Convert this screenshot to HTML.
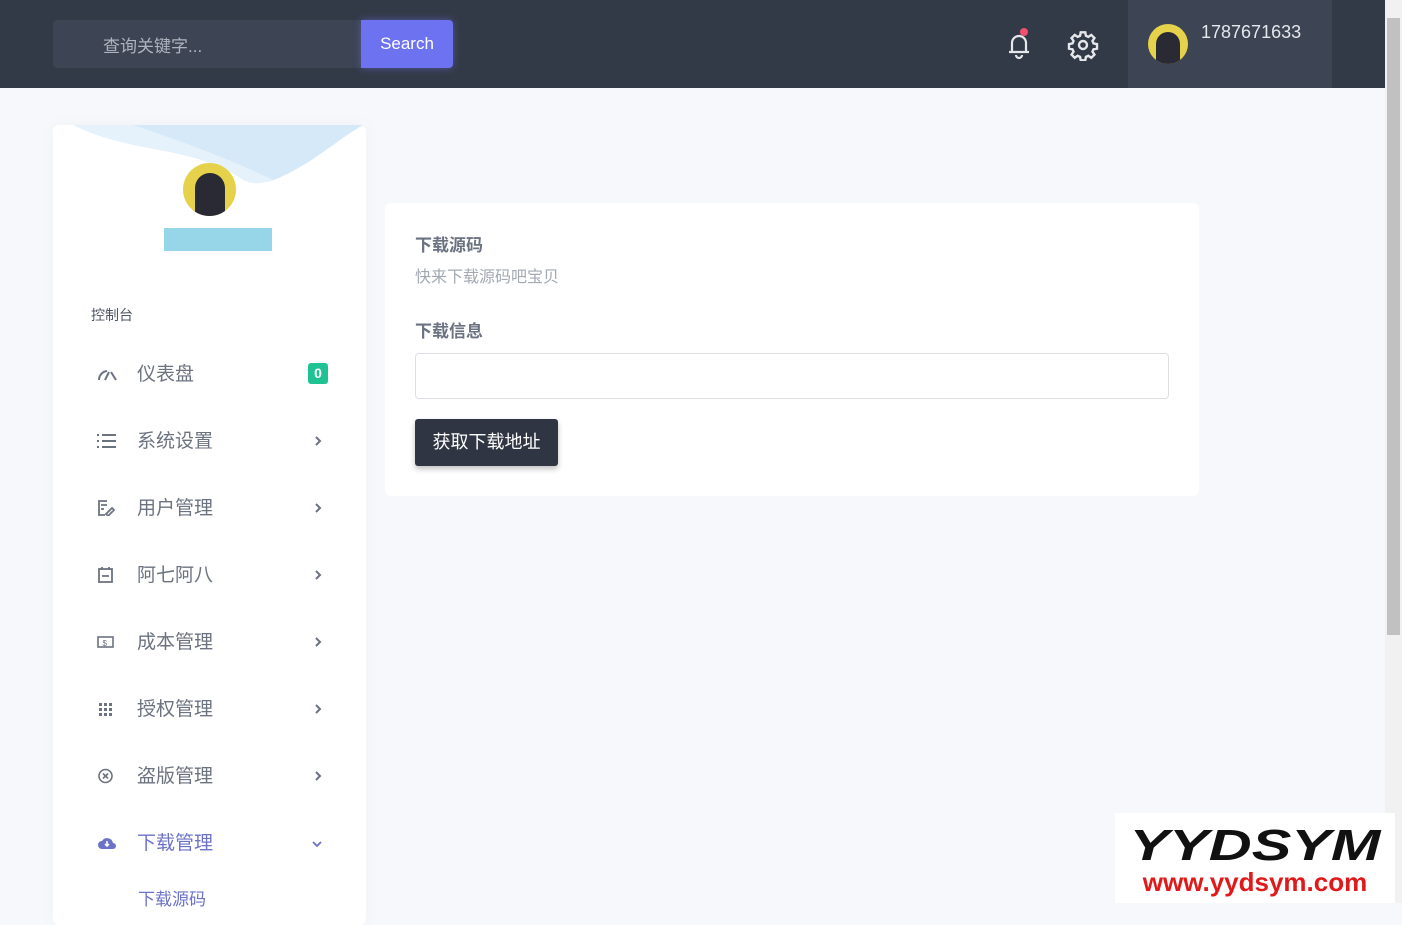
<!DOCTYPE html>
<html><head><meta charset="utf-8"><style>
*{box-sizing:border-box;margin:0;padding:0}
body{width:1402px;height:903px;overflow:hidden;background:#f7f8fc;font-family:"Liberation Sans","Noto Sans CJK SC",sans-serif;position:relative}
.hdr{position:absolute;left:0;top:0;width:1385px;height:88px;background:#333a47}
.search{position:absolute;left:53px;top:20px;width:308px;height:48px;background:#3d4453;border-radius:4px 0 0 4px;color:#aeb4bf;font-size:17px;padding:12px 0 0 50px}
.sbtn{position:absolute;left:361px;top:20px;width:92px;height:48px;background:#6c72f0;border-radius:0 4px 4px 0;color:#fff;font-size:17px;text-align:center;line-height:48px;box-shadow:0 0 8px rgba(108,114,240,.5)}
.user{position:absolute;left:1128px;top:0;width:204px;height:88px;background:#3d4454}
.av{border-radius:50%;background:#e6d24a;overflow:hidden;position:absolute}
.uname{position:absolute;left:73px;top:22px;color:#e5e7eb;font-size:18px}
.sb{position:absolute;right:0;top:0;width:17px;height:903px;background:#f1f1f1}
.thumb{position:absolute;left:2px;top:18px;width:13px;height:617px;background:#c1c1c1}
.side{position:absolute;left:53px;top:125px;width:313px;height:800px;background:#fff;border-radius:6px;box-shadow:0 0 20px rgba(0,0,0,.03)}
.item{position:absolute;left:0;width:313px;height:40px;color:#6b7280;font-size:19px}
.item .t{position:absolute;left:84px;top:4px}
.item svg{position:absolute;left:44px;top:11px}
.item svg.ch{left:260px;top:13px}
.card{position:absolute;left:385px;top:203px;width:814px;height:293px;background:#fff;border-radius:6px}
</style></head><body>
<div class="hdr">
<div class="search">查询关键字...</div>
<div class="sbtn">Search</div>
<svg style="position:absolute;left:1004px;top:28px" width="30" height="32" viewBox="0 0 30 32" fill="none" stroke="#e5e7eb" stroke-width="2.2"><path d="M5 24h20M8 24V15a7 7 0 0 1 14 0v9M12 27a3 3 0 0 0 6 0"/><circle cx="20" cy="4" r="4" fill="#f0506e" stroke="none"/></svg>
<svg style="position:absolute;left:1067px;top:29px" width="32" height="32" viewBox="0 0 24 24" fill="none" stroke="#e5e7eb" stroke-width="1.8"><circle cx="12" cy="12" r="3"/><path d="M10.3 2.5h3.4l.5 2.6 1.8.8 2.2-1.5 2.4 2.4-1.5 2.2.8 1.8 2.6.5v3.4l-2.6.5-.8 1.8 1.5 2.2-2.4 2.4-2.2-1.5-1.8.8-.5 2.6h-3.4l-.5-2.6-1.8-.8-2.2 1.5-2.4-2.4 1.5-2.2-.8-1.8-2.6-.5v-3.4l2.6-.5.8-1.8-1.5-2.2 2.4-2.4 2.2 1.5 1.8-.8z"/></svg>
<div class="user"><div class="av" style="left:20px;top:24px;width:40px;height:40px"><div style="position:absolute;left:8px;top:8px;width:24px;height:32px;background:#2a2a35;border-radius:12px 12px 0 0"></div></div><div class="uname">1787671633</div></div>
</div>
<div class="sb"><div class="thumb"></div></div>
<div class="side">
<svg style="position:absolute;left:20px;top:0" width="290" height="60" viewBox="0 0 290 60"><path d="M0 0C60 30 120 20 170 55C200 70 240 30 290 0Z" fill="#e6f2fb"/><path d="M60 0C120 20 170 40 200 55C240 40 270 10 290 0Z" fill="#cfe6f7" opacity=".7"/></svg>
<div class="av" style="left:130px;top:38px;width:53px;height:53px"><div style="position:absolute;left:12px;top:10px;width:30px;height:43px;background:#2a2a35;border-radius:15px 15px 0 0"></div></div>
<div style="position:absolute;left:111px;top:103px;width:108px;height:23px;background:#97d6e8"></div>
<div style="position:absolute;left:38px;top:180px;font-size:14px;color:#4b5563">控制台</div>
<div class="item" style="top:230px"><svg width="22" height="16" viewBox="0 0 22 16" fill="none" stroke="#6b7280" stroke-width="2"><path d="M2 14A9 9 0 0 1 10 5M12 6l-4 8M14 6l5 8"/></svg><span class="t">仪表盘</span><span style="position:absolute;left:255px;top:8px;width:20px;height:21px;background:#1fc293;border-radius:3px;color:#fff;font-size:14px;font-weight:bold;text-align:center;line-height:21px">0</span></div>
<div class="item" style="top:297px"><svg width="20" height="16" viewBox="0 0 20 16" fill="#6b7280"><rect x="0" y="1" width="2" height="2"/><rect x="5" y="1" width="14" height="2"/><rect x="0" y="7" width="2" height="2"/><rect x="5" y="7" width="14" height="2"/><rect x="0" y="13" width="2" height="2"/><rect x="5" y="13" width="14" height="2"/></svg><span class="t">系统设置</span><svg class="ch" width="10" height="12" viewBox="0 0 10 12" fill="none" stroke="#6b7280" stroke-width="2"><path d="M3 2l4 4-4 4"/></svg></div>
<div class="item" style="top:364px"><svg width="20" height="16" viewBox="0 0 20 16" fill="none" stroke="#6b7280" stroke-width="1.8"><path d="M10 1H2v14h6M4 5h6M4 9h3M9 14l6-6 2 2-6 6z"/></svg><span class="t">用户管理</span><svg class="ch" width="10" height="12" viewBox="0 0 10 12" fill="none" stroke="#6b7280" stroke-width="2"><path d="M3 2l4 4-4 4"/></svg></div>
<div class="item" style="top:431px"><svg width="20" height="16" viewBox="0 0 20 16" fill="none" stroke="#6b7280" stroke-width="1.8"><rect x="2" y="2" width="13" height="13"/><path d="M5 0v3M12 0v3M5 9h7"/></svg><span class="t">阿七阿八</span><svg class="ch" width="10" height="12" viewBox="0 0 10 12" fill="none" stroke="#6b7280" stroke-width="2"><path d="M3 2l4 4-4 4"/></svg></div>
<div class="item" style="top:498px"><svg width="20" height="16" viewBox="0 0 20 16" fill="none" stroke="#6b7280" stroke-width="1.6"><rect x="1" y="3" width="15" height="10"/><text x="5.5" y="12" font-size="8" fill="#6b7280" stroke="none">$</text></svg><span class="t">成本管理</span><svg class="ch" width="10" height="12" viewBox="0 0 10 12" fill="none" stroke="#6b7280" stroke-width="2"><path d="M3 2l4 4-4 4"/></svg></div>
<div class="item" style="top:565px"><svg width="20" height="16" viewBox="0 0 20 16" fill="#6b7280"><rect x="2" y="2" width="3" height="3"/><rect x="7" y="2" width="3" height="3"/><rect x="12" y="2" width="3" height="3"/><rect x="2" y="7" width="3" height="3"/><rect x="7" y="7" width="3" height="3"/><rect x="12" y="7" width="3" height="3"/><rect x="2" y="12" width="3" height="3"/><rect x="7" y="12" width="3" height="3"/><rect x="12" y="12" width="3" height="3"/></svg><span class="t">授权管理</span><svg class="ch" width="10" height="12" viewBox="0 0 10 12" fill="none" stroke="#6b7280" stroke-width="2"><path d="M3 2l4 4-4 4"/></svg></div>
<div class="item" style="top:632px"><svg width="20" height="16" viewBox="0 0 20 16" fill="none" stroke="#6b7280" stroke-width="1.6"><circle cx="8.5" cy="8" r="6.5"/><path d="M6 5.5l5 5M11 5.5l-5 5"/></svg><span class="t">盗版管理</span><svg class="ch" width="10" height="12" viewBox="0 0 10 12" fill="none" stroke="#6b7280" stroke-width="2"><path d="M3 2l4 4-4 4"/></svg></div>
<div class="item" style="top:699px;color:#6c72c8"><svg width="20" height="16" viewBox="0 0 20 16"><path d="M5 14a4 4 0 0 1 0-8 6 6 0 0 1 11 2 3 3 0 0 1 0 6z" fill="#6c72c8"/><path d="M10 6v5M8 9l2 2 2-2" stroke="#fff" stroke-width="1.6" fill="none"/></svg><span class="t">下载管理</span><svg class="ch" width="12" height="10" viewBox="0 0 12 10" fill="none" stroke="#6c72c8" stroke-width="1.8" style="left:258px;top:15px"><path d="M2 3l4 4 4-4"/></svg></div>
<div style="position:absolute;left:85px;top:760px;font-size:17px;color:#6c72c8">下载源码</div>
</div>
<div class="card">
<div style="position:absolute;left:30px;top:28px;font-size:17px;font-weight:bold;color:#6b7280">下载源码</div>
<div style="position:absolute;left:30px;top:60px;font-size:16px;color:#a3a9b3">快来下载源码吧宝贝</div>
<div style="position:absolute;left:30px;top:114px;font-size:17px;font-weight:bold;color:#6b7280">下载信息</div>
<div style="position:absolute;left:30px;top:150px;width:754px;height:46px;border:1px solid #dcdfe4;border-radius:4px"></div>
<div style="position:absolute;left:30px;top:216px;width:143px;height:47px;background:#2f3542;border-radius:3px;color:#fff;font-size:18px;text-align:center;line-height:47px;box-shadow:0 3px 6px rgba(0,0,0,.25)">获取下载地址</div>
</div>
<div style="position:absolute;left:1115px;top:813px;width:280px;height:90px;background:#fff;text-align:center">
<div style="font-size:44px;font-weight:bold;font-style:italic;color:#111;line-height:46px;margin-top:10px;transform:scaleX(1.35)">YYDSYM</div>
<div style="font-size:26px;font-weight:bold;color:#e01a1a;line-height:26px">www.yydsym.com</div>
</div>
</body></html>
